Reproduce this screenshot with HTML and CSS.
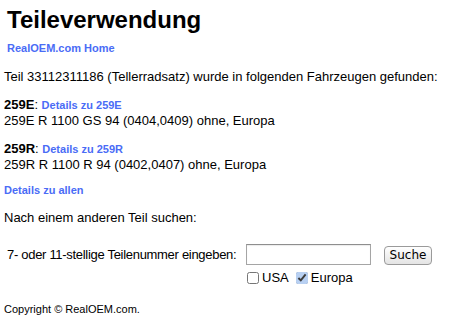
FILE: index.html
```
<!DOCTYPE html>
<html lang="de">

<head>
    <meta charset="UTF-8">
    <meta name="viewport" content="width=device-width, initial-scale=1.0">
    <title>Teileverwendung</title>
    <link rel="stylesheet" href="styles.css">
</head>

<body>
    <div class="header">
        <h1>Teileverwendung</h1>
        <a class="home" href="#">RealOEM.com Home</a>
    </div>

    <p class="found">Teil 33112311186 (Tellerradsatz) wurde in folgenden Fahrzeugen gefunden:</p>

    <div class="model">
        <b>259E</b>: <a class="small" href="#">Details zu 259E</a><br>
        259E R 1100 GS 94 (0404,0409) ohne, Europa
    </div>

    <div class="model">
        <b>259R</b>: <a class="small" href="#">Details zu 259R</a><br>
        259R R 1100 R 94 (0402,0407) ohne, Europa
    </div>

    <a class="small all" href="#">Details zu allen</a>

    <p class="search">Nach einem anderen Teil suchen:</p>

    <form class="form" onsubmit="return false">
        <label class="label" for="part">7- oder 11-stellige Teilenummer eingeben:</label>
        <input type="text" id="part" class="part">
        <button type="submit" class="btn">Suche</button>
        <div class="markets">
            <label><input type="checkbox"> USA</label>
            <label><input type="checkbox" checked> Europa</label>
        </div>
    </form>

    <div class="copy">Copyright &copy; RealOEM.com.</div>
</body>

</html>
```

FILE: styles.css
```
body {
    font-family: Helvetica, "Liberation Sans", Arial, sans-serif;
    font-size: 13px;
    line-height: 15px;
    color: #000;
    background: #fff;
    margin: 0;
    padding: 0 4px;
}

a {
    color: #4a6cf6;
    font-weight: bold;
    text-decoration: none;
}

.header {
    padding: 0 3px;
}

h1 {
    font-size: 24px;
    line-height: 28px;
    font-weight: bold;
    margin: 6px 0 0;
}

.home {
    display: block;
    font-size: 11px;
    line-height: 13px;
    margin-top: 8px;
}

.found {
    margin: 14px 0 0;
}

.model {
    margin-top: 13px;
}

.small {
    font-size: 11px;
}

.all {
    display: block;
    line-height: 13px;
    margin-top: 12px;
}

.search {
    margin: 13px 0 0;
}

.form {
    display: grid;
    grid-template-columns: 242px 138px auto;
    align-items: center;
    margin-top: 19px;
}

.label {
    padding-left: 3px;
    white-space: nowrap;
    letter-spacing: -0.3px;
}

.part {
    width: 125px;
    height: 21px;
    box-sizing: border-box;
    border: 1px solid #a5a5a5;
    border-top-color: #8e8e8e;
    box-shadow: inset 0 1px 1px rgba(0, 0, 0, 0.08);
    padding: 0 3px;
    margin: 0;
    font: 13px Helvetica, "Liberation Sans", Arial, sans-serif;
}

.btn {
    justify-self: start;
    width: 48px;
    height: 19px;
    padding: 0;
    border: 1px solid #9a9a9a;
    border-radius: 4px;
    background: linear-gradient(#ffffff, #f1f1f1 50%, #e4e4e4);
    font: 12px "Lucida Grande", "DejaVu Sans", sans-serif;
    color: #000;
    margin-top: 1px;
}

.markets {
    grid-column: 2 / 4;
    display: flex;
    gap: 6px;
    margin-top: 5px;
}

.markets label {
    display: flex;
    align-items: center;
}

.markets input {
    width: 12px;
    height: 12px;
    margin: 0 3px 0 1px;
    accent-color: #b8d0f2;
}

.copy {
    font-size: 11px;
    line-height: 13px;
    margin-top: 18px;
}
```
